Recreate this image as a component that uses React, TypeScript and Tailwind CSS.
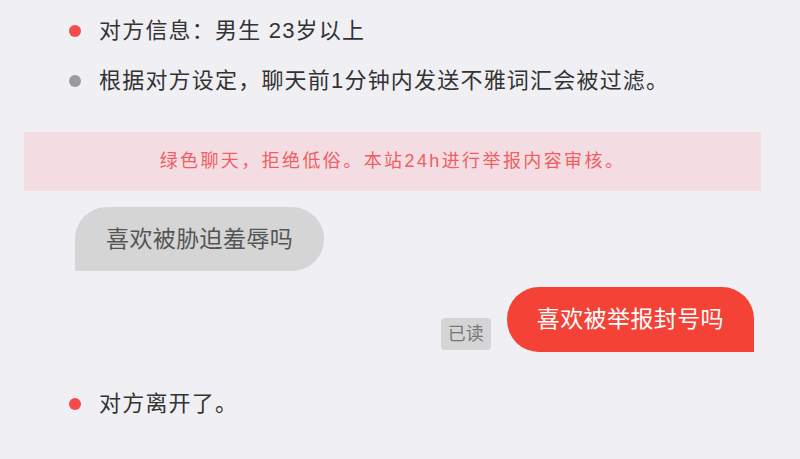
import React from 'react';

const font = "font-['Liberation_Sans','Noto_Sans_CJK_SC',sans-serif]";

function Notice({ dot, children }: { dot: 'red' | 'gray'; children: React.ReactNode }) {
  return (
    <div className="flex h-[50px] items-center pl-[69px]">
      <span
        className={
          dot === 'red'
            ? 'h-[12px] w-[12px] shrink-0 rounded-full bg-[#f44c4c]'
            : 'h-[12px] w-[12px] shrink-0 rounded-full bg-[#9a9a9f]'
        }
      />
      <span className="ml-[18px] text-[22px] leading-none tracking-[1.2px] text-[#333]">{children}</span>
    </div>
  );
}

export default function App() {
  return (
    <div className={`min-h-[459px] w-[800px] bg-[#efeff4] pt-[6px] ${font}`}>
      <Notice dot="red">对方信息：男生 23岁以上</Notice>
      <Notice dot="gray">根据对方设定，聊天前1分钟内发送不雅词汇会被过滤。</Notice>

      <div className="ml-[24px] mt-[26px] flex h-[59px] w-[737px] items-center justify-center bg-[#f3dde2]">
        <span className="text-[18px] tracking-[2.4px] text-[#f25d5f]">绿色聊天，拒绝低俗。本站24h进行举报内容审核。</span>
      </div>

      <div className="mt-[16px] flex pl-[75px]">
        <div className="flex h-[64px] items-center rounded-t-[32px] rounded-br-[32px] bg-[#d5d5d5] px-[31px] text-[23px] leading-none tracking-[0.4px] text-[#555]">
          喜欢被胁迫羞辱吗
        </div>
      </div>

      <div className="mt-[16px] flex items-end justify-end pr-[46px]">
        <span className="mb-[2px] flex h-[32px] w-[50px] items-center justify-center rounded-[4px] bg-[#d5d5d5] text-[18px] text-[#777]">
          已读
        </span>
        <div className="ml-[16px] flex h-[65px] items-center rounded-t-[32px] rounded-bl-[32px] bg-[#f44336] px-[30px] text-[23px] leading-none tracking-[0.4px] text-white">
          喜欢被举报封号吗
        </div>
      </div>

      <div className="mt-[27px]">
        <Notice dot="red">对方离开了。</Notice>
      </div>
    </div>
  );
}
